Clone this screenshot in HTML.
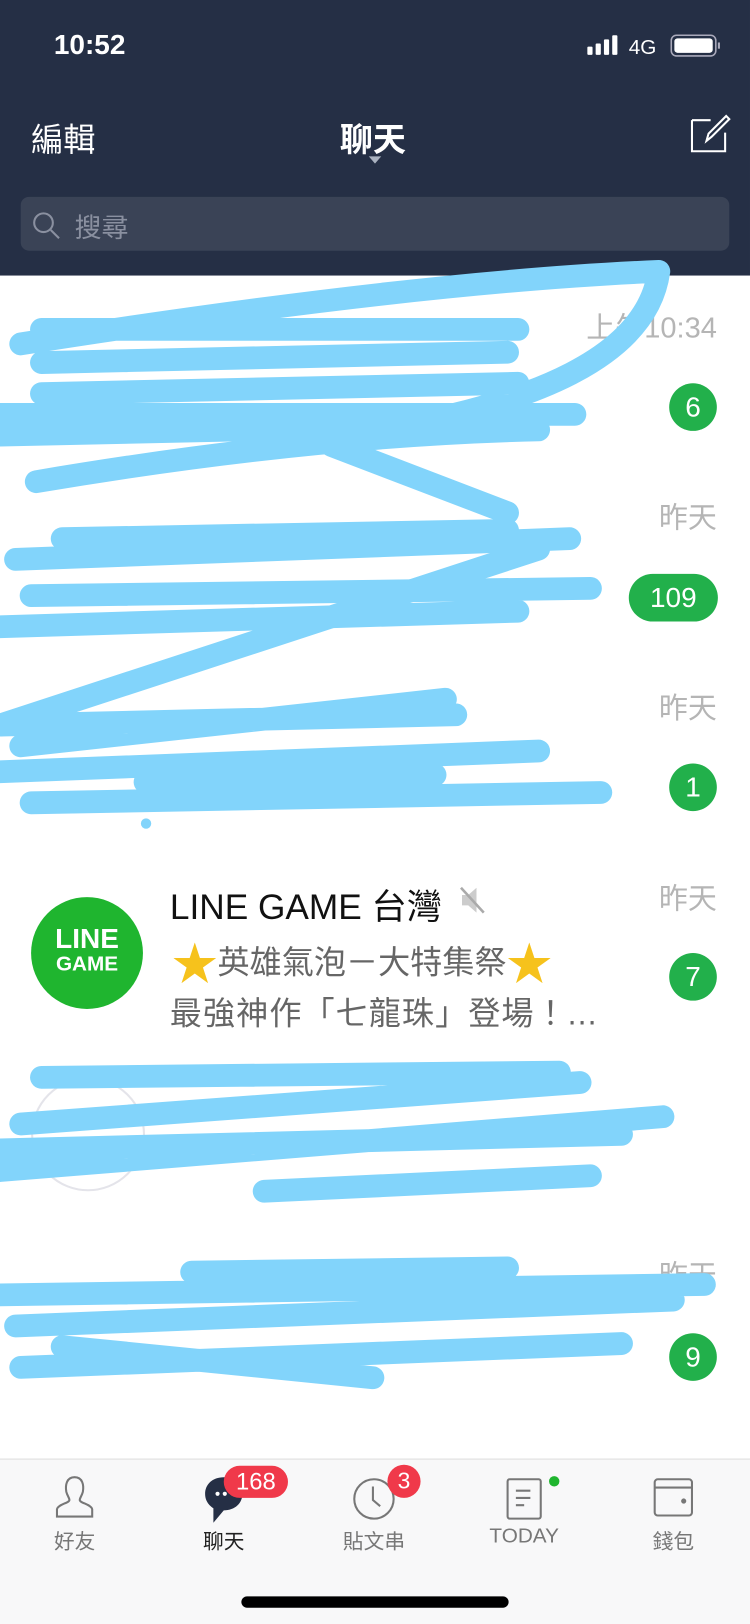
<!DOCTYPE html>
<html><head><meta charset="utf-8"><style>
*{margin:0;padding:0;box-sizing:border-box}
html,body{width:750px;height:1624px;overflow:hidden;background:#fff}
#w{width:724px;height:1568px;transform:scale(1.0359);transform-origin:0 0;position:relative;font-family:"Liberation Sans","Noto Sans CJK TC",sans-serif}
.a{position:absolute}
.hdr{left:0;top:0;width:724px;height:266px;background:#252f45}
.t{color:#b5b5b5;font-size:28px;right:32px;line-height:32px}
.b{background:#22b04b;color:#fff;font-size:27px;border-radius:23px;height:46px;min-width:46px;text-align:center;line-height:46px;padding:0 8px}
.tab{top:1472px;width:100px;text-align:center;font-size:20px;color:#777}
.st{display:inline-block;color:#f6c21c;font-size:44px;line-height:40px;vertical-align:-6px}
</style></head><body><div id="w">
<div class="a hdr"></div>
<div class="a" style="left:52px;top:28px;color:#fff;font-size:27px;font-weight:bold">10:52</div>
<svg class="a" style="left:565px;top:32px" width="132" height="24">
<rect x="2" y="13" width="5" height="8" rx="1" fill="#fff"/><rect x="10" y="10" width="5" height="11" rx="1" fill="#fff"/><rect x="18" y="6" width="5" height="15" rx="1" fill="#fff"/><rect x="26" y="2" width="5" height="19" rx="1" fill="#fff"/>
<text x="42" y="20" fill="#fff" font-size="20" font-family="Liberation Sans">4G</text>
<rect x="83" y="2" width="43" height="20" rx="5" fill="none" stroke="#aab" stroke-width="1.5"/><rect x="86" y="5" width="37" height="14" rx="3" fill="#fff"/><rect x="128" y="9" width="2" height="6" fill="#aab"/></svg>
<div class="a" style="left:30px;top:110px;color:#fff;font-size:31px">編輯</div>
<div class="a" style="left:328px;top:110px;color:#fff;font-size:32px;font-weight:bold">聊天</div>
<div class="a" style="left:356px;top:151px;width:0;height:0;border-left:6px solid transparent;border-right:6px solid transparent;border-top:7px solid #aab2c0"></div>
<svg class="a" style="left:664px;top:108px" width="42" height="42"><path d="M4 8H22M4 8V38H36V20" fill="none" stroke="#fff" stroke-width="2"/><path d="M18 28L20 21L37 4L40 7L23 24Z" fill="none" stroke="#fff" stroke-width="2"/></svg>
<div class="a" style="left:20px;top:190px;width:684px;height:52px;background:#3a4356;border-radius:8px"></div>
<svg class="a" style="left:30px;top:203px" width="30" height="30"><circle cx="12" cy="12" r="9" fill="none" stroke="#8a90a0" stroke-width="2"/><path d="M19 19L27 27" stroke="#8a90a0" stroke-width="2"/></svg>
<div class="a" style="left:72px;top:200px;color:#8a90a0;font-size:26px">搜尋</div>

<div class="a t" style="top:301px">上午10:34</div>
<div class="a b" style="left:646px;top:370px">6</div>
<div class="a t" style="top:484px">昨天</div>
<div class="a b" style="left:607px;top:554px;width:86px">109</div>
<div class="a t" style="top:668px">昨天</div>
<div class="a b" style="left:646px;top:737px">1</div>
<div class="a t" style="top:852px">昨天</div>
<div class="a b" style="left:646px;top:920px">7</div>
<div class="a t" style="top:1216px">昨天</div>
<div class="a b" style="left:646px;top:1287px">9</div>
<div class="a" style="left:30px;top:1040px;width:110px;height:110px;border-radius:50%;border:2px solid #e4e4ea"></div>

<div class="a" style="left:30px;top:866px;width:108px;height:108px;border-radius:50%;background:#1fb52f;color:#fff;text-align:center;font-weight:bold">
<div style="font-size:27px;margin-top:26px;line-height:28px">LINE</div><div style="font-size:20px;line-height:22px">GAME</div></div>
<div class="a" style="left:164px;top:848px;font-size:34px;color:#111;white-space:nowrap">LINE GAME 台灣</div>
<svg class="a" style="left:442px;top:854px" width="28" height="30"><path d="M4 10H10L18 3V27L10 20H4Z" fill="#ccc"/><path d="M3 3L25 27" stroke="#aaa" stroke-width="2.5"/></svg>
<div class="a" style="left:166px;top:904px;font-size:31px;color:#666;white-space:nowrap"><span class="st">★</span>英雄氣泡－大特集祭<span class="st">★</span></div>
<div class="a" style="left:164px;top:953px;font-size:31px;letter-spacing:1px;color:#666;white-space:nowrap">最強神作「七龍珠」登場！...</div>

<svg class="a" style="left:0;top:0" width="724" height="1408" fill="none" stroke="#82d4fb" stroke-width="22" stroke-linecap="round">
<path d="M40 318L500 318M20 332Q400 272 636 262M636 262Q620 380 330 420M0 400L555 400M0 420L470 410M35 465Q300 420 520 415M40 350L490 340M40 380L500 370M320 430L490 495M0 700L520 530"/>
<path d="M15 540L550 520M30 575L570 568M0 605L500 590M60 520L490 512"/>
<path d="M20 720L430 675M0 745L520 725M30 775L580 765M0 700L440 690M140 755L420 748"/>
<circle cx="141" cy="795" r="5" fill="#82d4fb" stroke="none"/>
<path d="M20 1085L560 1045M0 1130L640 1078M40 1040L540 1035M255 1150L570 1135M0 1110L600 1095"/>
<path d="M0 1250L680 1240M15 1280L650 1255M20 1320L600 1297M185 1228L490 1224M60 1300L360 1330"/>
</svg>

<div class="a" style="left:0;top:1408px;width:724px;height:160px;background:#f8f8f9;border-top:1px solid #ddd"></div>
<svg class="a" style="left:52px;top:1424px" width="40" height="42" fill="none" stroke="#777" stroke-width="2"><path d="M20 2C12 2 11 10 12 16C13 20 15 22 15 24C15 27 4 28 3 33V40H37V33C36 28 25 27 25 24C25 22 27 20 28 16C29 10 28 2 20 2Z"/></svg>
<svg class="a" style="left:196px;top:1424px" width="40" height="48"><path d="M20 2C9 2 2 9 2 18C2 26 7 30 10 32V46L20 34C31 34 38 27 38 18C38 9 31 2 20 2Z" fill="#252f45"/><circle cx="14" cy="18" r="2" fill="#fff"/><circle cx="21" cy="18" r="2" fill="#fff"/></svg>
<svg class="a" style="left:340px;top:1426px" width="42" height="42" fill="none" stroke="#777" stroke-width="2"><circle cx="21" cy="21" r="19"/><path d="M20 9V22L27 28"/></svg>
<svg class="a" style="left:488px;top:1426px" width="36" height="42" fill="none" stroke="#777" stroke-width="2"><rect x="2" y="2" width="32" height="38" rx="2"/><path d="M10 13H24M10 20H24M10 27H18"/></svg>
<svg class="a" style="left:630px;top:1426px" width="40" height="40" fill="none" stroke="#777" stroke-width="2"><rect x="2" y="2" width="36" height="35" rx="3"/><path d="M2 10H38"/><circle cx="30" cy="23" r="1.5" fill="#777"/></svg>
<div class="a" style="left:216px;top:1415px;width:62px;height:31px;border-radius:16px;background:#f0394a;color:#fff;font-size:23px;text-align:center;line-height:31px">168</div>
<div class="a" style="left:374px;top:1414px;width:32px;height:32px;border-radius:50%;background:#f0394a;color:#fff;font-size:22px;text-align:center;line-height:32px">3</div>
<div class="a" style="left:530px;top:1425px;width:10px;height:10px;border-radius:50%;background:#1fb52f"></div>
<div class="a tab" style="left:22px">好友</div>
<div class="a tab" style="left:166px;color:#222">聊天</div>
<div class="a tab" style="left:311px">貼文串</div>
<div class="a tab" style="left:456px">TODAY</div>
<div class="a tab" style="left:600px">錢包</div>
<div class="a" style="left:233px;top:1541px;width:258px;height:11px;border-radius:6px;background:#000"></div>
</div></body></html>
